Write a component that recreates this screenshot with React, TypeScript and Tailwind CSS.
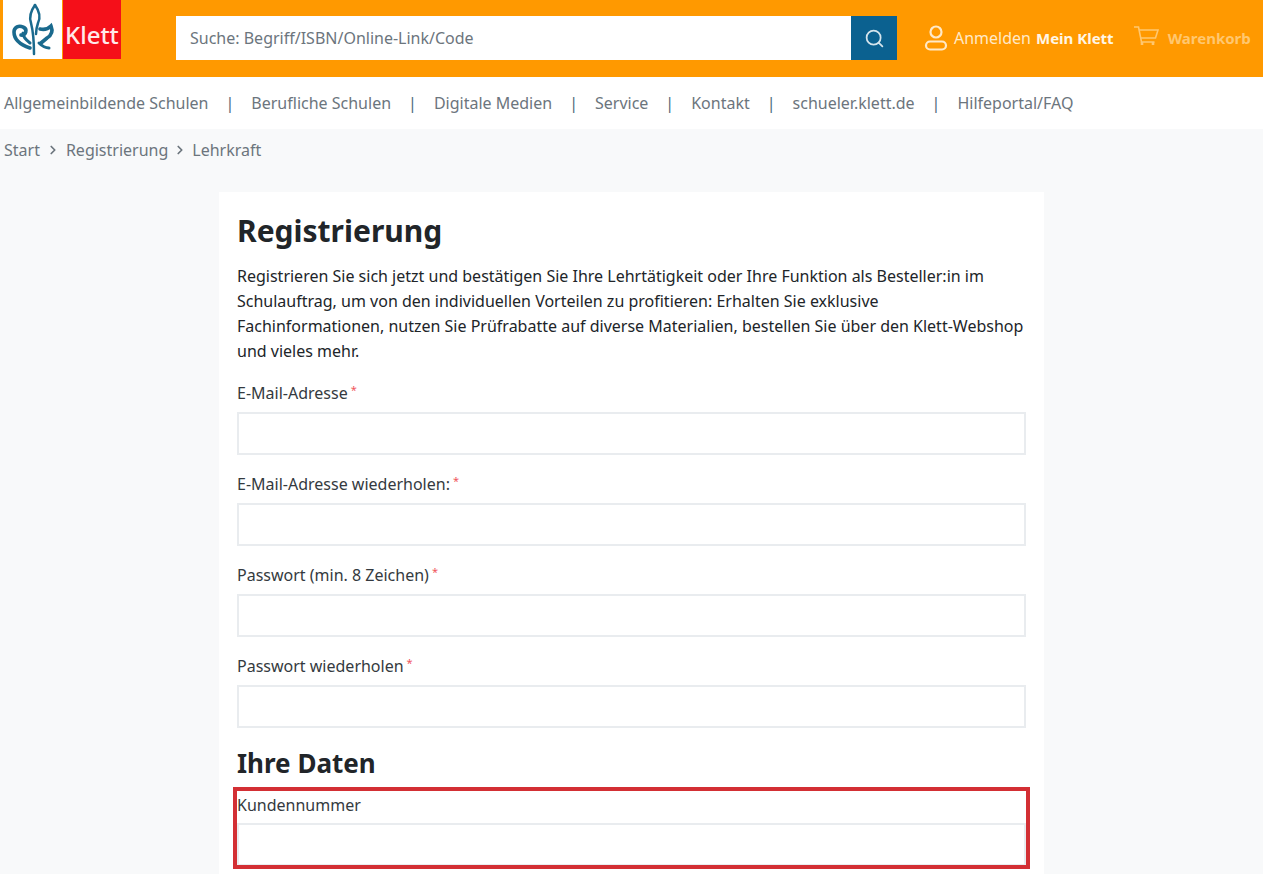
import { Search, ChevronRight } from "lucide-react";

const navItems = [
  "Allgemeinbildende Schulen",
  "Berufliche Schulen",
  "Digitale Medien",
  "Service",
  "Kontakt",
  "schueler.klett.de",
  "Hilfeportal/FAQ",
];

const Field = ({ label, className }: { label: string; className: string }) => (
  <div className={className}>
    <div className="text-[16px] leading-[20px] text-[#343a40] flex">
      {label}
      <span className="text-[#f0565c] text-[11px] leading-[14px] ml-[3px]">*</span>
    </div>
    <div className="h-[43px] mt-[9px] border-2 border-[#e9ecef] bg-white"></div>
  </div>
);

const Logo = () => (
  <div className="flex h-[59px] ml-[3px]">
    <div className="w-[59px] bg-white flex items-center justify-center">
      <svg width="59" height="59" viewBox="0 0 59 59" fill="none" stroke="#1a6a8e" strokeWidth="3" strokeLinecap="round">
        <path d="M32 5c-5 7-6 12-4 18 2 8 3 19 3 31" strokeWidth="2.5" />
        <path d="M32 5c5 7 6 12 3 18-1 3-2 6-2 11" strokeWidth="2.5" />
        <path d="M27 48C18 45 11 40 11 32c0-5 5-7 9-5 5 2 3 9-2 8" strokeWidth="3.6" />
        <path d="M27 43c-4-3-7-6-7-10" />
        <path d="M37 29c4 1 7 1 11-3 2 5 1 9-4 12l-6 5" strokeWidth="3.6" />
        <path d="M36 43c3 3 6 5 10 5" />
      </svg>
    </div>
    <div className="w-[58px] ml-px bg-[#f50f19] text-[#ffe9e9] text-[24px] leading-[69px] pl-[2px] font-medium">
      Klett
    </div>
  </div>
);

const App = () => {
  return (
    <div className="bg-[#f8f9fa] h-[874px] overflow-hidden font-['Noto_Sans',sans-serif]">
      <header className="h-[77px] bg-[#ff9900] flex items-start">
        <Logo />
        <div className="flex mt-[16px] ml-[55px] w-[721px] h-[44px]">
          <div className="flex-1 bg-white text-[16px] leading-[44px] pl-[14px] text-[#6c757d]">
            Suche: Begriff/ISBN/Online-Link/Code
          </div>
          <div className="w-[46px] bg-[#0b6190] flex items-center justify-center">
            <Search size={21} strokeWidth={2} className="text-[#d5e4ec]" />
          </div>
        </div>
        <div className="flex items-center mt-[23px] ml-[27px] text-[#ffe9c7] text-[16px] leading-[30px] whitespace-nowrap">
          <svg width="24" height="28" viewBox="0 0 24 28" fill="none" stroke="currentColor" strokeWidth="2.2" className="mr-[6px]">
            <circle cx="12" cy="8" r="5.5" />
            <rect x="2" y="17.5" width="20" height="8" rx="4" />
          </svg>
          <span>Anmelden</span>
          <span className="ml-[5px] font-bold text-[#fff6e6] text-[15px]">Mein Klett</span>
          <svg width="26" height="26" viewBox="0 0 26 26" fill="none" stroke="#ffc76f" strokeWidth="1.6" className="ml-[19px]">
            <path d="M1 2h4.5l3 15h13" />
            <path d="M6 5h19l-2.5 8H8" />
            <path d="M9 17v3M20 17v3" strokeWidth="2.6" />
          </svg>
          <span className="ml-[9px] font-bold text-[#ffc76f] text-[15px]">Warenkorb</span>
        </div>
      </header>
      <nav className="h-[52px] bg-white flex items-center pl-[4px] text-[16px] text-[#6c757d] whitespace-nowrap">
        {navItems.map((item, i) => (
          <div key={item} className="flex items-center">
            {i > 0 && <span className="mx-[17px] text-[#4d6a7a]">|</span>}
            <span>{item}</span>
          </div>
        ))}
      </nav>
      <div className="flex items-center h-[20px] mt-[11px] pl-[4px] text-[16px] text-[#6c757d]">
        <span>Start</span>
        <ChevronRight size={14} strokeWidth={3} className="mx-[6px]" />
        <span>Registrierung</span>
        <ChevronRight size={14} strokeWidth={3} className="mx-[5px]" />
        <span>Lehrkraft</span>
      </div>
      <main className="relative w-[825px] ml-[219px] mt-[32px] h-[682px] bg-white pl-[18px] pr-[18px] pt-[18px]">
        <h1 className="text-[30px] leading-[42px] font-bold text-[#212529]">Registrierung</h1>
        <p className="mt-[12px] text-[16px] leading-[25px] text-[#212529]">
          Registrieren Sie sich jetzt und bestätigen Sie Ihre Lehrtätigkeit oder Ihre Funktion als Besteller:in im
          <br />
          Schulauftrag, um von den individuellen Vorteilen zu profitieren: Erhalten Sie exklusive
          <br />
          Fachinformationen, nutzen Sie Prüfrabatte auf diverse Materialien, bestellen Sie über den Klett-Webshop
          <br />
          und vieles mehr.
        </p>
        <Field label="E-Mail-Adresse" className="mt-[19px]" />
        <Field label="E-Mail-Adresse wiederholen:" className="mt-[19px]" />
        <Field label="Passwort (min. 8 Zeichen)" className="mt-[19px]" />
        <Field label="Passwort wiederholen" className="mt-[19px]" />
        <h2 className="mt-[13px] text-[26px] leading-[44px] font-bold text-[#212529]">Ihre Daten</h2>
        <div className="mt-[10px] text-[16px] leading-[20px] text-[#343a40]">Kundennummer</div>
        <div className="h-[43px] mt-[8px] border-2 border-[#e9ecef] bg-white"></div>
        <div className="absolute left-[14px] top-[595px] w-[797px] h-[82px] border-[4px] border-[#d32f34]"></div>
      </main>
    </div>
  );
};

export default App;
